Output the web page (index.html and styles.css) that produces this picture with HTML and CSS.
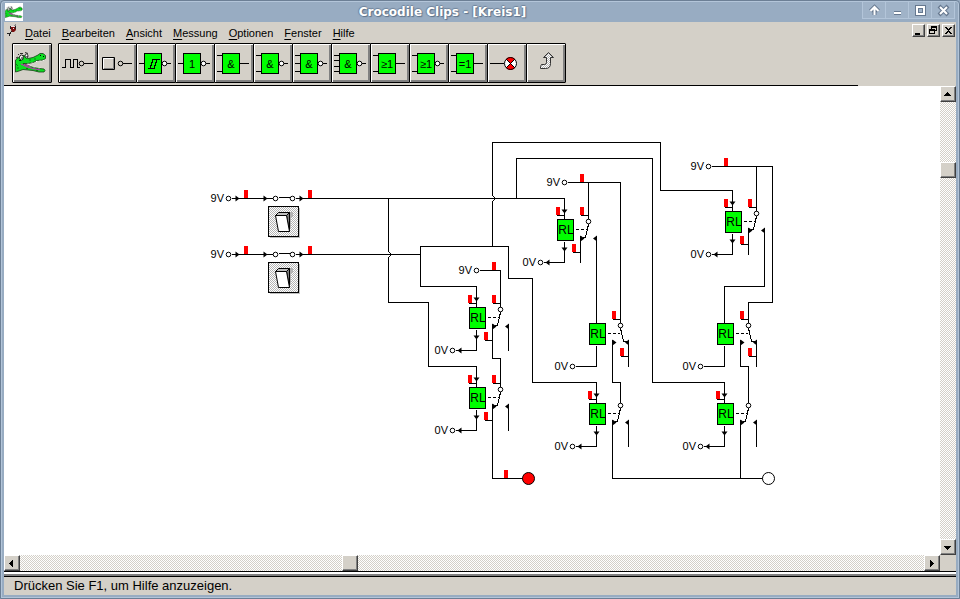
FILE: index.html
```html
<!DOCTYPE html>
<html lang="de">
<head>
<meta charset="utf-8">
<title>Crocodile Clips - [Kreis1]</title>
<link rel="stylesheet" href="styles.css">
</head>
<body>
<svg class="defs" width="0" height="0" aria-hidden="true">
  <defs>
    <pattern id="dither" width="2" height="2" patternUnits="userSpaceOnUse">
      <rect width="2" height="2" fill="#fff"/><rect width="1" height="1" fill="#b4b4b4"/><rect x="1" y="1" width="1" height="1" fill="#b4b4b4"/>
    </pattern>
    <symbol id="croc" viewBox="0 0 32 22">
      <path d="M.5 8L3 6L5 4.500L9 3.500L13 6.500L18 5.500L23 3L25 1.500L28 1.500L30.500 3.500L30.500 6.500L28 8L22 8.500L18 10.500L13 11.500L8 11.500L13 13.500L18 15.500L24 16.500L29 17L30 18.500L29 20L24 20L18 18.500L8 17.500L4 19L.5 20z" fill="#0be020" stroke="#143c14" stroke-width=".8"/>
      <path d="M6 12L11 14.500L18 16.500L25 18M9 12.500L14 14" stroke="#d020c0" fill="none"/>
      <path d="M13 11.500l1 1M17 10.500l1 1M21 9l1 1M25 8.500l1 1M28 8l.5 1M15 14.500l1-1M19 15.500l1-1M24 16.500l1-1" stroke="#fff" fill="none"/>
      <path d="M1 12l2 2M2 16h2M14 8h2M19 7h2M11 16.500h2M21 18.500h2" stroke="#0a7a14" fill="none"/>
      <ellipse cx="6.500" cy="5.500" rx="2" ry="2.500" fill="#fff" stroke="#000" stroke-width=".8"/>
      <ellipse cx="11.500" cy="4" rx="1.500" ry="2" fill="#fff" stroke="#000" stroke-width=".8"/>
      <path d="M6.500 5h1v2h-1zM11.500 4h1v1h-1zM25 3h1v1h-1zM28 4h1v1h-1z" fill="#000"/>
      <path d="M3 3l1-1M5 1.500h3M10 .5l3 1M1 6l2-1M4 8.500h2" stroke="#000" stroke-width=".8" fill="none"/>
    </symbol>
    <symbol id="box" viewBox="0 0 40 40" overflow="visible">
      <path class="gate" d="M8.500 10.500h17v20h-17z"/>
    </symbol>
    <symbol id="out" viewBox="0 0 40 40"><path class="ln" d="M26 20.500h9"/></symbol>
    <symbol id="nout" viewBox="0 0 40 40"><circle class="ring" cx="28.500" cy="20.500" r="2.300"/><path class="ln" d="M31 20.500h4"/></symbol>
    <symbol id="two" viewBox="0 0 40 40"><path class="ln" d="M3 12.500h5M3 28.500h5"/></symbol>

    <!-- Relay: origin is the coil wire at the top edge of the box -->
    <g id="relay">
      <path class="gate" d="M-7 0h16v21h-16z"/>
      <path class="ln" d="M0 22v21h-21"/>
      <circle class="ring" cx="-24" cy="43" r="2.300"/>
      <path class="ln" d="M11 10h3M16 10h3M21 10h2"/>
      <path class="ln" d="M16 16v27M32 16v27"/>
      <path class="tri" d="M16 16v6l4 -3zM32.500 16v6l-4 -3z"/>
    </g>
    <g id="left"><path class="ln" d="M24 5l-1 4l-2 9h-3"/><circle class="ring" cx="24" cy="2" r="2.300"/></g>
    <g id="right"><path class="ln" d="M24 5l1 4l2 9h3"/><circle class="ring" cx="24" cy="2" r="2.300"/></g>
    <g id="coilflow"><path class="tri" d="M-3 -10h6l-3 4zM-3 28h6l-3 4zM-15 40v6l-4 -3z"/></g>
    <g id="tap"><path class="flag" d="M-8.500 -8.500h4v8h-4z"/><path class="ln" d="M-8 0h8"/></g>
    <path id="flag" class="flag" d="M-.5 -8.500h4v8h-4z"/>
    <path id="flow" class="tri" d="M-1 -3v6l4 -3z"/>

    <g id="rocker">
      <path d="M2 32h30V2h-1v29H2z" fill="#c0c0c0"/>
      <rect x=".5" y=".5" width="30" height="30" fill="url(#dither)" stroke="#000"/>
      <path d="M21 6h4v4l-2 2v9l-2 4z" fill="#b4b4b4"/>
      <path d="M7.500 9.500L10.500 6.500H21.500L19.500 9.500z" fill="#c0c0c0" stroke="#000"/>
      <path d="M18.500 9.500L21.500 6.500V25.500z" fill="#808080" stroke="#000"/>
      <path d="M7.500 9.500H18.500L21.500 25.500H10.500z" fill="#fff" stroke="#000"/>
    </g>
  </defs>
</svg>

<div class="window">
  <header class="titlebar">
    <svg class="appicon" viewBox="0 0 18 18"><rect width="18" height="18" fill="#fff"/><use href="#croc" x="0" y="3" width="18" height="13"/></svg>
    <h1>Crocodile Clips - [Kreis1]</h1>
    <div class="winbtns">
      <button aria-label="Einrollen"><svg viewBox="0 0 23 17"><path class="halo" d="M11.500 13V5M7.500 9L11.500 5L15.500 9"/><path class="sign" d="M11.500 13V5M7.500 9L11.500 5L15.500 9"/></svg></button>
      <button aria-label="Minimieren"><svg viewBox="0 0 23 17"><path class="halo" d="M8 11h7"/><path class="sign" d="M8 11h7"/></svg></button>
      <button aria-label="Maximieren"><svg viewBox="0 0 23 17"><path class="halo" d="M8 5h7v7H8z"/><path class="sign" d="M8 5h7v7H8z"/><path d="M9.500 6.500h4v4h-4z" fill="none" stroke="#66788f"/></svg></button>
      <button aria-label="Schließen"><svg viewBox="0 0 23 17"><path class="halo" d="M7 4l9 9M16 4l-9 9"/><path class="sign" d="M8 5l7 7M15 5l-7 7"/></svg></button>
    </div>
  </header>

  <div class="client">
    <nav class="menubar" aria-label="Menü">
      <svg class="docicon" viewBox="0 0 11 13"><path d="M8 0h1v1H8zM7 1h2v1H7z" fill="#888"/><path d="M4 3h5v3L7 8H5L4 6z" fill="#7a1010"/><path d="M3 2h1v3H3zM8 2h1v3H8zM4 7h1v1H4zM3 8h1v2H3zM0 9h3v1H0zM2 10h1v2H2z" fill="#222"/><path d="M4 2h4v1H4zM6 4h1v1H6z" fill="#f4dede"/></svg>
      <button><u>D</u>atei</button>
      <button><u>B</u>earbeiten</button>
      <button><u>A</u>nsicht</button>
      <button><u>M</u>essung</button>
      <button><u>O</u>ptionen</button>
      <button><u>F</u>enster</button>
      <button><u>H</u>ilfe</button>
      <div class="mdi">
        <button class="raised" aria-label="Dokument minimieren"><svg viewBox="0 0 10 10"><path d="M2 8h5v2H2z"/></svg></button>
        <button class="raised" aria-label="Dokument wiederherstellen"><svg viewBox="0 0 10 10"><path d="M3 1h6v5H7V5h1V3H4v1H3zM1 4h6v5H1zM2 6v2h4V6z" fill-rule="evenodd"/></svg></button>
        <button class="raised" aria-label="Dokument schließen"><svg viewBox="0 0 10 10"><path d="M2 2h2v1h1v1h1V3h1V2h2v1H8v1H7v1H6v1h1v1h1v1h1v1H7V8H6V7H5v1H4v1H2V8h1V7h1V6h1V5H4V4H3V3H2z"/></svg></button>
      </div>
    </nav>

    <div class="toolbar" role="toolbar" aria-label="Bauteile">
      <button class="tool home" aria-label="Crocodile"><svg viewBox="0 0 40 40"><use href="#croc" x="3" y="9" width="32" height="22"/></svg></button>
      <button class="tool" aria-label="Taktgeber"><svg viewBox="0 0 40 40"><path class="ln" d="M4 24.500h3.500v-8h5v8h3v-8h4v8h2M26 20.500h9"/><circle class="ring" cx="23.500" cy="20.500" r="2.300"/></svg></button>
      <button class="tool" aria-label="Logikeingang"><svg viewBox="0 0 40 40"><path d="M5.500 14.500h12v12h-12z" fill="#d4d0c8" stroke="#000"/><path d="M6.500 25.500v-10h10" fill="none" stroke="#fff"/><path d="M7 25.500h9.500v-10" fill="none" stroke="#808080"/><circle class="ring" cx="23.500" cy="20.500" r="2.300"/><path class="ln" d="M26 20.500h9"/></svg></button>
      <button class="tool" aria-label="Schmitt-Trigger"><svg viewBox="0 0 40 40"><path class="ln" d="M3 20.500h5"/><use href="#box"/><path class="ln" d="M12 25.500h6l3-9h3M14 25.500l3-9h4"/><use href="#nout"/></svg></button>
      <button class="tool" aria-label="Inverter"><svg viewBox="0 0 40 40"><path class="ln" d="M3 20.500h5"/><use href="#box"/><text x="17" y="25">1</text><use href="#nout"/></svg></button>
      <button class="tool" aria-label="UND"><svg viewBox="0 0 40 40"><use href="#two"/><use href="#box"/><text x="17" y="25">&amp;</text><use href="#out"/></svg></button>
      <button class="tool" aria-label="NAND"><svg viewBox="0 0 40 40"><use href="#two"/><use href="#box"/><text x="17" y="25">&amp;</text><use href="#nout"/></svg></button>
      <button class="tool" aria-label="NAND mit 3 Eingängen"><svg viewBox="0 0 40 40"><use href="#two"/><path class="ln" d="M3 20.500h5"/><use href="#box"/><text x="17" y="25">&amp;</text><use href="#nout"/></svg></button>
      <button class="tool" aria-label="NAND mit 4 Eingängen"><svg viewBox="0 0 40 40"><use href="#two"/><path class="ln" d="M3 17.500h5M3 23.500h5"/><use href="#box"/><text x="17" y="25">&amp;</text><use href="#nout"/></svg></button>
      <button class="tool" aria-label="ODER"><svg viewBox="0 0 40 40"><use href="#two"/><use href="#box"/><text x="17" y="25">≥1</text><use href="#out"/></svg></button>
      <button class="tool" aria-label="NOR"><svg viewBox="0 0 40 40"><use href="#two"/><use href="#box"/><text x="17" y="25">≥1</text><use href="#nout"/></svg></button>
      <button class="tool" aria-label="Exklusiv-ODER"><svg viewBox="0 0 40 40"><use href="#two"/><use href="#box"/><text x="17" y="25">=1</text><use href="#out"/></svg></button>
      <button class="tool" aria-label="Logikanzeige"><svg viewBox="0 0 40 40"><path class="ln" d="M3 20.500h14"/><circle cx="23.500" cy="20.500" r="6" fill="#fff"/><path d="M23.500 20.500L19 16A6 6 0 0 1 28 16zM23.500 20.500L19 25A6 6 0 0 0 28 25z" fill="#f00"/><path class="ln" d="M19 16l9 9M28 16l-9 9"/><circle cx="23.500" cy="20.500" r="6" fill="none" stroke="#000"/></svg></button>
      <button class="tool" aria-label="Zurück"><svg viewBox="0 0 40 40"><path d="M22.500 9.500L27.500 14.500H24.500V20.500Q24.500 25.500 19.500 25.500H14.500V23.500L15.500 21.500H18.500Q20.500 21.500 20.500 19.500V14.500H17.500z" fill="url(#dither)" stroke="#333"/></svg></button>
    </div>

    <main class="workspace">
      <div class="sheet">
        <svg class="circuit" width="936" height="469" viewBox="4 86 936 469" role="img" aria-label="Schaltung Kreis1">
          <g transform="translate(.5 .5)">
            <!-- inputs -->
            <path class="ln" d="M231 198H272M295 198H564V219M278 197H289"/>
            <path class="ln" d="M231 254H272M295 254H420M278 253H289"/>
            <!-- supply and signal wires -->
            <path class="ln" d="M388 198V251L390 253V255L388 257V302H428V366H476V387"/>
            <path class="ln" d="M476 307V286H420V246H508V278H532V382H596V403"/>
            <path class="ln" d="M492 246V201L494 199V197L492 195V142H660V190H732V211"/>
            <path class="ln" d="M516 198V158H652V382H724V403"/>
            <path class="ln" d="M479 270H500V307M492 349V358H500V387M492 429V478H522"/>
            <path class="ln" d="M567 182H620V323M588 182V219M596 261V323"/>
            <path class="ln" d="M612 365V382H620V403M612 445V478H762M740 445V478"/>
            <path class="ln" d="M711 166H772V302H748V323M756 166V211M764 253V286H724V323"/>
            <path class="ln" d="M740 365V366H748V403"/>
            <g class="rings">
              <circle class="ring" cx="228" cy="198" r="2.300"/><circle class="ring" cx="275" cy="198" r="2.300"/><circle class="ring" cx="292" cy="198" r="2.300"/>
              <circle class="ring" cx="228" cy="254" r="2.300"/><circle class="ring" cx="275" cy="254" r="2.300"/><circle class="ring" cx="292" cy="254" r="2.300"/>
              <circle class="ring" cx="476" cy="270" r="2.300"/><circle class="ring" cx="564" cy="182" r="2.300"/><circle class="ring" cx="708" cy="166" r="2.300"/>
            </g>
            <use href="#flow" x="236" y="198"/><use href="#flow" x="264" y="198"/><use href="#flow" x="300" y="198"/>
            <use href="#flow" x="236" y="254"/><use href="#flow" x="264" y="254"/><use href="#flow" x="300" y="254"/>
            <use href="#flag" x="244" y="198"/><use href="#flag" x="308" y="198"/>
            <use href="#flag" x="244" y="254"/><use href="#flag" x="308" y="254"/>
            <use href="#flag" x="492" y="270"/><use href="#flag" x="580" y="182"/><use href="#flag" x="724" y="166"/><use href="#flag" x="504" y="478"/>
            <!-- relays -->
            <use href="#relay" x="476" y="307"/><use href="#left" x="476" y="307"/><use href="#coilflow" x="476" y="307"/>
            <use href="#tap" x="476" y="303"/><use href="#tap" x="500" y="303"/><use href="#tap" x="492" y="340"/>
            <use href="#relay" x="476" y="387"/><use href="#left" x="476" y="387"/><use href="#coilflow" x="476" y="387"/>
            <use href="#tap" x="476" y="383"/><use href="#tap" x="500" y="383"/><use href="#tap" x="492" y="420"/>
            <use href="#relay" x="564" y="219"/><use href="#left" x="564" y="219"/><use href="#coilflow" x="564" y="219"/>
            <use href="#tap" x="564" y="215"/><use href="#tap" x="588" y="215"/><use href="#tap" x="580" y="252"/>
            <use href="#relay" x="732" y="211"/><use href="#left" x="732" y="211"/><use href="#coilflow" x="732" y="211"/>
            <use href="#tap" x="732" y="207"/><use href="#tap" x="756" y="207"/><use href="#tap" x="748" y="244"/>
            <use href="#relay" x="596" y="323"/><use href="#right" x="596" y="323"/>
            <use href="#tap" x="620" y="319"/><use href="#tap" x="628" y="356"/>
            <use href="#relay" x="596" y="403"/><use href="#left" x="596" y="403"/><use href="#coilflow" x="596" y="403"/><use href="#tap" x="596" y="399"/>
            <use href="#relay" x="724" y="323"/><use href="#right" x="724" y="323"/>
            <use href="#tap" x="748" y="319"/><use href="#tap" x="756" y="356"/>
            <use href="#relay" x="724" y="403"/><use href="#left" x="724" y="403"/><use href="#coilflow" x="724" y="403"/><use href="#tap" x="724" y="399"/>
            <!-- lamps -->
            <circle cx="528" cy="478" r="6" fill="#f00" stroke="#000"/>
            <circle cx="768" cy="478" r="6" fill="#fff" stroke="#000"/>
          </g>
          <use href="#rocker" x="268" y="206"/>
          <use href="#rocker" x="268" y="262"/>
          <g class="volt">
            <text x="224" y="202">9V</text><text x="224" y="258">9V</text><text x="472" y="274">9V</text><text x="560" y="186">9V</text><text x="704" y="170">9V</text>
            <text x="448" y="354">0V</text><text x="448" y="434">0V</text><text x="536" y="266">0V</text><text x="704" y="258">0V</text>
            <text x="568" y="370">0V</text><text x="568" y="450">0V</text><text x="696" y="370">0V</text><text x="696" y="450">0V</text>
          </g>
          <g class="coil">
            <text x="478" y="322">RL</text><text x="478" y="402">RL</text><text x="566" y="234">RL</text><text x="734" y="226">RL</text>
            <text x="598" y="338">RL</text><text x="598" y="418">RL</text><text x="726" y="338">RL</text><text x="726" y="418">RL</text>
          </g>
        </svg>
      </div>
      <div class="scroll vertical">
        <button class="raised" aria-label="Nach oben"><svg viewBox="0 0 12 12"><path d="M6 4h1v1h1v1h1v1h1v1H3V7h1V6h1V5h1z"/></svg></button>
        <span class="before"></span><span class="raised thumb"></span><span class="after"></span>
        <button class="raised" aria-label="Nach unten"><svg viewBox="0 0 12 12"><path d="M3 5h7v1H9v1H8v1H7v1H6V8H5V7H4V6H3z"/></svg></button>
      </div>
      <div class="scroll horizontal">
        <button class="raised" aria-label="Nach links"><svg viewBox="0 0 12 12"><path d="M4 6h1V5h1V4h1V3h1v7H7V9H6V8H5V7H4z"/></svg></button>
        <span class="before"></span><span class="raised thumb"></span><span class="after"></span>
        <button class="raised" aria-label="Nach rechts"><svg viewBox="0 0 12 12"><path d="M5 3h1v1h1v1h1v1h1v1H8v1H7v1H6v1H5z"/></svg></button>
      </div>
    </main>
    <footer class="status">Drücken Sie F1, um Hilfe anzuzeigen.</footer>
  </div>
</div>
</body>
</html>
```
FILE: styles.css
```css
* { box-sizing: border-box; }

body {
  margin: 0;
  background: #98acc2;
  color: #000;
  font-family: "Liberation Sans", Arial, sans-serif;
  font-size: 11px;
}

.defs { position: absolute; }

button {
  margin: 0;
  padding: 0;
  border: 0;
  background: none;
  color: inherit;
  font: inherit;
}

svg { display: block; }

.window {
  display: flex;
  flex-direction: column;
  min-height: 100vh;
  padding: 0 3px 3px;
  border: 1px solid #6c7f95;
  border-radius: 4px 4px 0 0;
  background: #98acc2;
  box-shadow: inset 0 0 0 1px #b3c5d9;
}

/* Title bar */
.titlebar {
  display: flex;
  align-items: center;
  height: 21px;
}

.appicon { width: 18px; height: 18px; margin-left: 1px; }

.titlebar h1 {
  flex: 1;
  margin: 0;
  color: #fff;
  font: bold 12px "DejaVu Sans", sans-serif;
  text-align: center;
  text-shadow: 1px 1px 1px #5d7188, -1px 0 1px #71849b, 0 -1px 1px #71849b;
}

.winbtns { display: flex; align-self: flex-start; height: 18px; margin-right: 1px; }
.winbtns button {
  width: 23px;
  height: 17px;
  margin-top: 1px;
  border: 1px solid #b3c5d9;
  border-width: 0 0 1px 1px;
  background: #a0b3c8;
}
.winbtns button:last-child { border-right-width: 1px; width: 24px; }
.winbtns svg { width: 23px; height: 17px; }
.halo { fill: none; stroke: #66788f; stroke-width: 4; }
.sign { fill: none; stroke: #fff; stroke-width: 2; }

.client {
  display: flex;
  flex: 1;
  flex-direction: column;
  background: #d4d0c8;
}

/* Menu */
.menubar {
  display: flex;
  align-items: center;
  gap: 11px;
  height: 21px;
  padding: 0 1px 0 3px;
}
.docicon { width: 11px; height: 13px; margin: -4px -4px 0 0; }
.menubar u { text-underline-offset: 2px; }
.mdi { display: flex; gap: 2px; margin-left: auto; margin-top: -5px; }

.raised {
  display: block;
  flex: none;
  border: 1px solid;
  border-color: #fff #404040 #404040 #fff;
  box-shadow: inset -1px -1px #808080;
  background-color: #d4d0c8;
}
.mdi .raised { width: 13px; height: 13px; }
.mdi svg { width: 10px; height: 10px; }

/* Toolbar */
.toolbar {
  display: flex;
  height: 43px;
  margin-right: 98px;
  padding-left: 8px;
  border-bottom: 1px solid #000;
}
.tool {
  width: 40px;
  height: 40px;
  margin-right: -1px;
  border: 1px solid #000;
  border-radius: 1px;
  box-shadow: inset 1px 1px #fff, inset -2px -2px #808080;
}
.tool.home { margin-right: 6px; }
.tool svg { width: 40px; height: 40px; margin: -1px; }
.tool text {
  font-size: 11px;
  text-anchor: middle;
}

.ln { fill: none; stroke: #000; shape-rendering: crispEdges; }
.ring { fill: #fff; stroke: #000; }
.tool .ring { fill: #d4d0c8; }
.tri { fill: #000; }
.gate { fill: #0f0; stroke: #000; shape-rendering: crispEdges; }
.flag { fill: #f00; shape-rendering: crispEdges; }

/* Drawing sheet and scroll bars */
.workspace {
  display: grid;
  flex: 1;
  grid-template-columns: 1fr 16px;
  grid-template-rows: 1fr 16px;
}
.sheet { min-width: 0; overflow: hidden; background: #fff; }
.volt { font-size: 11px; text-anchor: end; }
.coil { font-size: 12px; text-anchor: middle; }

.scroll {
  display: flex;
  background: repeating-conic-gradient(#d4d0c8 0 25%, #fff 0 50%) 0 0 / 2px 2px;
}
.scroll .raised { width: 16px; height: 16px; }
.scroll svg { width: 12px; height: 12px; }
.vertical { flex-direction: column; }
.vertical .before { flex: 60; }
.vertical .after { flex: 361; }
.horizontal .before { flex: 323; }
.horizontal .after { flex: 567; }

/* Status line */
.status {
  height: 24px;
  padding: 6px 10px 0;
  border-top: 1px solid #000;
  background: linear-gradient(#fff 0 2px, #808080 2px 4px, #000 4px 5px, #d4d0c8 5px);
  font-size: 13px;
  line-height: 16px;
}
```
